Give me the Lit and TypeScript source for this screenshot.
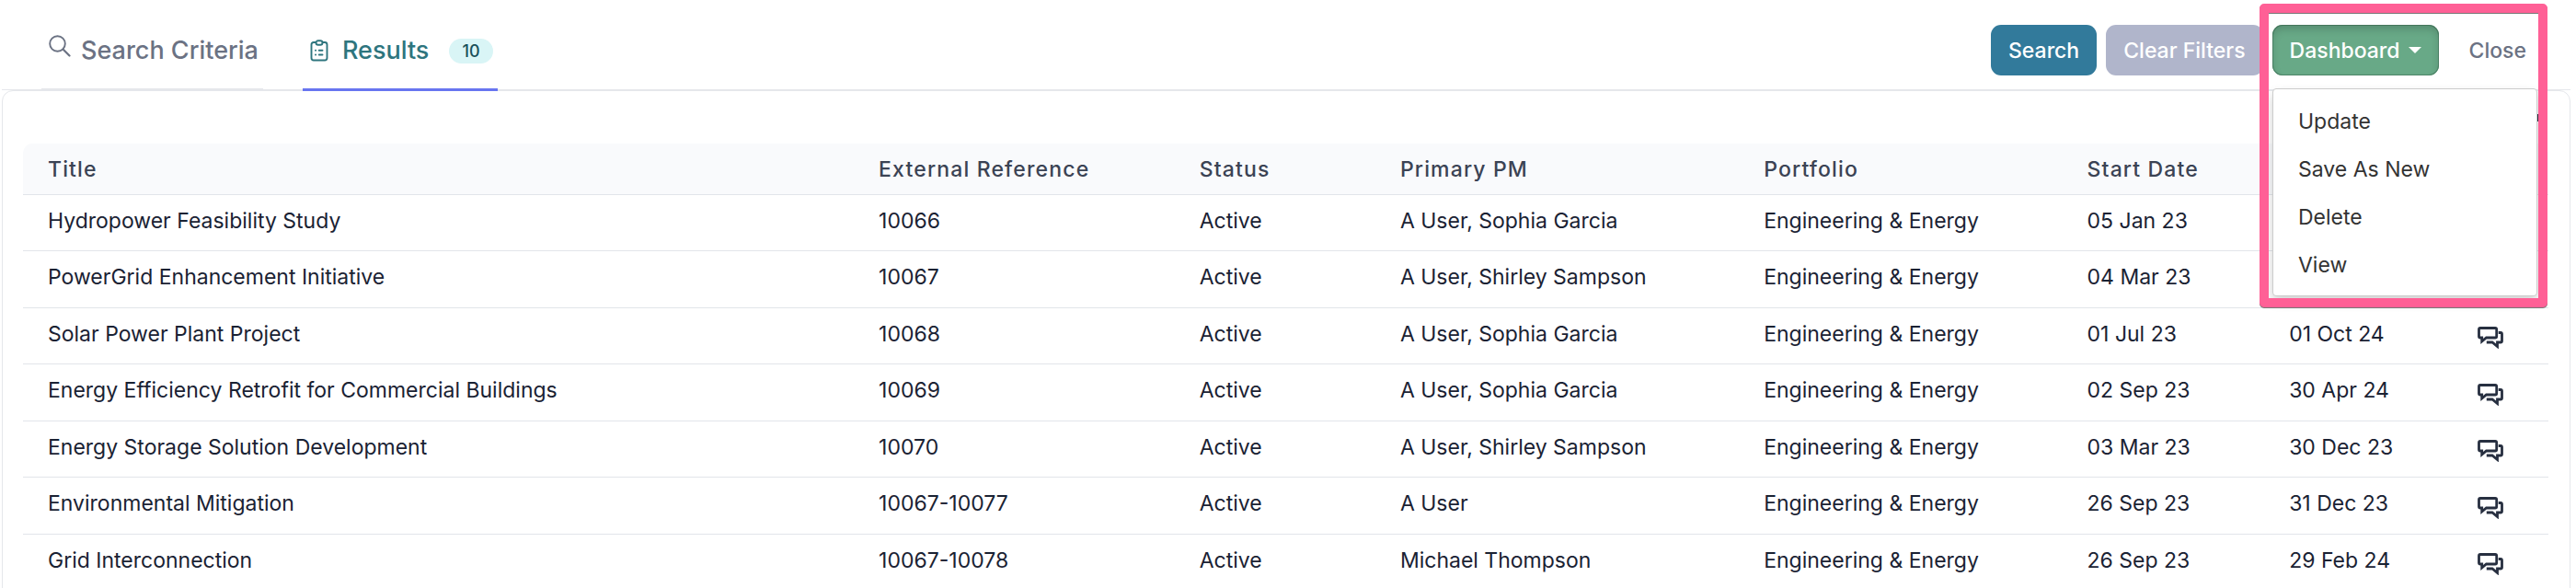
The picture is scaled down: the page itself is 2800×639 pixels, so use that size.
import { LitElement, html, css, svg } from "lit";
import { customElement } from "lit/decorators.js";

interface Project {
  title: string;
  ref: string;
  status: string;
  pm: string;
  portfolio: string;
  start: string;
  end: string;
}

const row = (title: string, ref: string, pm: string, start: string, end: string): Project => ({
  title, ref, status: "Active", pm, portfolio: "Engineering & Energy", start, end,
});

const PROJECTS: Project[] = [
  row("Hydropower Feasibility Study", "10066", "A User, Sophia Garcia", "05 Jan 23", ""),
  row("PowerGrid Enhancement Initiative", "10067", "A User, Shirley Sampson", "04 Mar 23", ""),
  row("Solar Power Plant Project", "10068", "A User, Sophia Garcia", "01 Jul 23", "01 Oct 24"),
  row("Energy Efficiency Retrofit for Commercial Buildings", "10069", "A User, Sophia Garcia", "02 Sep 23", "30 Apr 24"),
  row("Energy Storage Solution Development", "10070", "A User, Shirley Sampson", "03 Mar 23", "30 Dec 23"),
  row("Environmental Mitigation", "10067-10077", "A User", "26 Sep 23", "31 Dec 23"),
  row("Grid Interconnection", "10067-10078", "Michael Thompson", "26 Sep 23", "29 Feb 24"),
];

const MENU = ["Update", "Save As New", "Delete", "View"];

const searchIcon = svg`<svg class="icon-search" viewBox="0 0 24 24" aria-hidden="true">
  <circle cx="9.5" cy="9.5" r="8.3" fill="none" stroke="currentColor" stroke-width="1.9"/>
  <path d="M15.5 15.5 22.5 22.5" fill="none" stroke="currentColor" stroke-width="2.2" stroke-linecap="round"/>
</svg>`;

const clipboardIcon = svg`<svg class="icon-clip" viewBox="0 0 20 24" fill="none" stroke="currentColor" stroke-width="1.9" stroke-linecap="round" stroke-linejoin="round" aria-hidden="true">
  <path d="M6 3H4Q1.5 3 1.5 5.5V20Q1.5 22.5 4 22.5H16Q18.5 22.5 18.5 20V5.5Q18.5 3 16 3H14"/>
  <rect x="6.5" y="1.2" width="7" height="4.6" rx="2.3"/>
  <path d="M6 11.8h.1M9.8 11.8H13.5M6 16.5h.1M9.8 16.5H13.5"/>
</svg>`;

const chatIcon = svg`<svg class="icon-chat" viewBox="0 0 28 24" fill="none" stroke="currentColor" stroke-width="2.8" stroke-linejoin="miter" aria-hidden="true">
  <path d="M3 1.5H19.2Q20.700 1.5 20.7 3V10.5Q20.7 12 19.2 12H9.5L4.7 16V12H3Q1.5 12 1.5 10.5V3Q1.5 1.5 3 1.5Z"/>
  <path d="M22.7 6.5H25Q26.5 6.5 26.5 8V15.5Q26.5 17 25 17H21.5V21.500L16 17H9.8"/>
</svg>`;

const gearIcon = svg`<svg class="icon-gear" viewBox="0 0 24 24" fill="none" stroke="currentColor" stroke-width="4" aria-hidden="true">
  <circle cx="12" cy="12" r="6"/>
  <path d="M12 2v4M12 18v4M2 12h4"/>
  <path d="M18 12h6" stroke-width="8"/>
</svg>`;

@customElement("app-root")
export class AppRoot extends LitElement {
  static styles = css`
    :host {
      display: block;
      height: 100vh;
      overflow: hidden;
      background: #fff;
      font-family: Inter, "Liberation Sans", sans-serif;
      font-size: 23px;
      line-height: 32px;
      color: #1a2233;
    }
    * { box-sizing: border-box; }
    .page { display: flex; flex-direction: column; min-height: 100%; padding: 0 6px 0 2px; }
    .bar {
      display: flex;
      justify-content: space-between;
      align-items: flex-start;
      height: 98px;
      border-bottom: 1px solid #e5e7eb;
      padding: 0 1px 0 43px;
    }
    .tabs { display: flex; gap: 43px; height: 99px; }
    .tab {
      display: flex;
      align-items: center;
      height: 99px;
      padding: 14px 5px 0 8px;
      border-bottom: 3px solid #e5e7eb;
      color: #6b7283;
      font-size: 27px;
      font-weight: 500;
      text-decoration: none;
      white-space: nowrap;
    }
    .tab.on { position: relative; color: #2e757e; border-color: #6875f0; }
    .icon-search { width: 24px; height: 24px; margin: 0 11px 11px 0; }
    .icon-clip { width: 20px; height: 24px; margin-right: 15px; }
    .badge {
      margin-left: 22px;
      padding: 0 14px;
      border-radius: 14px;
      background: #d9f5f6;
      color: #19505a;
      font-size: 18px;
      line-height: 27px;
    }
    .actions { position: relative; display: flex; gap: 10px; padding: 27px 0 0; }
    button { font: inherit; border: 0; margin: 0; background: none; cursor: pointer; text-align: left; }
    .btn {
      display: flex;
      align-items: center;
      gap: 9px;
      height: 55px;
      padding: 0 19px;
      border-radius: 11px;
      color: #fff;
      font-weight: 500;
      white-space: nowrap;
    }
    .find { background: #327a9b; }
    .clear { background: #b0b5cb; }
    .dash { background: #68a987; box-shadow: inset 0 5px 9px rgba(0, 0, 0, 0.16), inset 0 0 0 1px #50896b; }
    .caret { width: 14px; height: 9px; }
    .close { color: #6b7283; padding: 0 47px 0 23px; }
    .menu {
      position: absolute;
      z-index: 2;
      top: 96px;
      right: 35px;
      width: 288px;
      margin: 0;
      padding: 9px 0 7px;
      list-style: none;
      background: #fff;
      border: 1px solid #ccc;
      border-radius: 4px;
      box-shadow: 0 6px 12px rgba(0, 0, 0, 0.18);
    }
    .item { display: block; width: 100%; padding: 0 27px; line-height: 52px; color: #333; }
    .frame {
      position: absolute;
      z-index: 3;
      top: 4px;
      right: 24px;
      width: 313px;
      height: 330px;
      border: 10px solid #ff6096;
      border-radius: 5px;
      filter: drop-shadow(0 1px 0 #777);
      pointer-events: none;
    }
    .panel {
      flex: 1;
      border: 1px solid #e5e7eb;
      border-radius: 12px 12px 0 0;
      padding: 0 23px 0 22px;
    }
    .tools { display: flex; justify-content: flex-end; align-items: center; height: 57px; padding-right: 11px; }
    .gear { padding: 0; color: #272f40; }
    .icon-gear { display: block; width: 24px; height: 24px; }
    table { width: 100%; border-collapse: separate; border-spacing: 0; table-layout: fixed; }
    th, td { text-align: left; padding: 0 0 0 27px; white-space: nowrap; border-bottom: 1px solid #e2e5ea; }
    th { height: 56px; background: #f9fafc; color: #3b4354; font-weight: 500; letter-spacing: 0.05em; }
    th:first-child { border-top-left-radius: 10px; }
    th:last-child { border-top-right-radius: 10px; }
    td { height: 61px; padding-bottom: 5px; }
    tr:nth-child(even) td { height: 62px; }
    .icon-chat { display: block; width: 28px; height: 24px; }
    .chat { display: block; padding: 9px 0 0; color: #272f40; }
    .c-title { width: 32.9%; }
    .c-ref { width: 12.7%; }
    .c-status { width: 7.95%; }
    .c-pm { width: 14.4%; }
    .c-folio { width: 12.8%; }
    .c-start { width: 8%; }
    .c-end { width: 7.45%; }
  `;

  render() {
    return html`
      <div class="page">
        <header class="bar">
          <nav class="tabs">
            <a class="tab" href="#criteria">${searchIcon}Search Criteria</a>
            <a class="tab on" href="#results">${clipboardIcon}Results<span class="badge">10</span></a>
          </nav>
          <div class="actions">
            <button class="btn find">Search</button>
            <button class="btn clear">Clear Filters</button>
            <button class="btn dash" aria-haspopup="true" aria-expanded="true">Dashboard
              <svg class="caret" viewBox="0 0 14 9" aria-hidden="true"><path d="M0 1H14L7 8Z" fill="currentColor"/></svg>
            </button>
            <button class="btn close">Close</button>
            <ul class="menu">
              ${MENU.map((m) => html`<li><button class="item">${m}</button></li>`)}
            </ul>
            <div class="frame"></div>
          </div>
        </header>
        <main class="panel">
          <div class="tools"><button class="gear" aria-label="Settings">${gearIcon}</button></div>
          <table>
            <colgroup>
              <col class="c-title"><col class="c-ref"><col class="c-status"><col class="c-pm">
              <col class="c-folio"><col class="c-start"><col class="c-end"><col>
            </colgroup>
            <thead>
              <tr>
                <th>Title</th><th>External Reference</th><th>Status</th><th>Primary PM</th>
                <th>Portfolio</th><th>Start Date</th><th></th><th></th>
              </tr>
            </thead>
            <tbody>
              ${PROJECTS.map((p) => html`
                <tr>
                  <td>${p.title}</td><td>${p.ref}</td><td>${p.status}</td><td>${p.pm}</td>
                  <td>${p.portfolio}</td><td>${p.start}</td><td>${p.end}</td>
                  <td><button class="chat" aria-label="Comments">${chatIcon}</button></td>
                </tr>`)}
            </tbody>
          </table>
        </main>
      </div>
    `;
  }
}
